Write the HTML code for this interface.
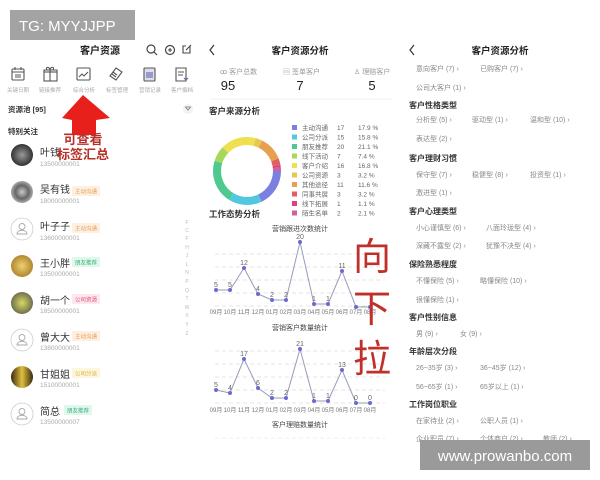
<!DOCTYPE html>
<html><head><meta charset="utf-8"><style>
html,body{margin:0;padding:0;background:#fff;width:600px;height:480px;overflow:hidden}
svg{display:block;font-family:"Liberation Sans","Noto Sans CJK SC",sans-serif}
.t{font-size:7px;fill:#888}
.s{font-size:8.5px;fill:#333;font-weight:bold}
.nm{font-size:10px;fill:#333}
.ph{font-size:6.5px;fill:#aaa}
.lg{font-size:6.5px;fill:#666}
.ax{font-size:6px;fill:#777}
.v{font-size:7px;fill:#666}
</style></head><body>
<svg width="600" height="480" viewBox="0 0 600 480">
<rect width="600" height="480" fill="#fff"/>

<text x="100" y="54" text-anchor="middle" font-size="10" font-weight="bold" fill="#222">客户资源</text>
<circle cx="151" cy="49" r="4" fill="none" stroke="#444" stroke-width="1.2"/><line x1="154" y1="52" x2="157" y2="55" stroke="#444" stroke-width="1.2"/>
<circle cx="170" cy="50" r="4.5" fill="none" stroke="#444" stroke-width="1.2"/><path d="M168 50h4M170 48v4" stroke="#444" stroke-width="1.1"/>
<path d="M190 46v7h-7v-7h3M186 50l5-5" fill="none" stroke="#444" stroke-width="1.1"/>
<g fill="none" stroke="#555" stroke-width="1.1">
<rect x="12" y="69" width="12" height="11" rx="1"/><path d="M12 72h12M15 67v3M21 67v3M15 75h6M15 77h6"/>
<rect x="44" y="72" width="13" height="9"/><path d="M44 72v-2h13v2M50 70v11M47 70c-2-3 2-4 3 0c1-4 5-3 3 0"/>
<rect x="77" y="68" width="13" height="12" rx="1"/><path d="M79 77l3-3 2 2 4-4"/>
<path d="M110 76l6-8 6 4-6 8z M113 72l4 3M112 74l4 3"/>
<rect x="144" y="68" width="11" height="13" rx="1" fill="#dde" /><rect x="146" y="72" width="7" height="6" fill="#99c" stroke="none"/>
<path d="M176 68h10v13h-10z M178 72h6M178 75h5"/><path d="M184 78l2 2 2-2" stroke="#66a"/>
</g>
<g class="t" style="font-size:5.5px;fill:#aaa" text-anchor="middle">
<text x="18" y="92">关键日期</text><text x="50" y="92">链接推荐</text><text x="84" y="92">综合分析</text><text x="117" y="92">标签管理</text><text x="150" y="92">营销记录</text><text x="182" y="92">客户撰档</text>
</g>
<text x="8" y="112" class="s" style="font-size:7.5px">资源池 [95]</text>
<circle cx="188" cy="109" r="5" fill="#f2f2f2"/><path d="M185.5 107h5l-2.5 3z" fill="none" stroke="#777" stroke-width="0.8"/>
<text x="8" y="134" class="s" style="font-size:7.5px">特别关注</text>

<defs>
<radialGradient id="g1"><stop offset="0" stop-color="#999"/><stop offset="1" stop-color="#333"/></radialGradient>
<radialGradient id="g2"><stop offset="0" stop-color="#ccc"/><stop offset=".6" stop-color="#666"/><stop offset="1" stop-color="#aaa"/></radialGradient>
<radialGradient id="g3"><stop offset="0" stop-color="#f0d070"/><stop offset="1" stop-color="#b08830"/></radialGradient>
<radialGradient id="g4"><stop offset="0" stop-color="#d8d860"/><stop offset="1" stop-color="#707050"/></radialGradient>
<linearGradient id="g5"><stop offset="0" stop-color="#3a2a10"/><stop offset=".5" stop-color="#e0c040"/><stop offset="1" stop-color="#3a2a10"/></linearGradient>
<g id="pp"><circle r="11" fill="#fff" stroke="#ccc" stroke-width="0.8"/><circle cy="-2.5" r="3" fill="none" stroke="#aaa" stroke-width="0.9"/><path d="M-5 5c0-5 10-5 10 0z" fill="none" stroke="#aaa" stroke-width="0.9"/></g>
</defs>
<circle cx="22" cy="155" r="11" fill="url(#g1)"/>
<text x="40" y="156" class="nm">叶钱</text><text x="40" y="166" class="ph">13500000001</text>
<circle cx="22" cy="192" r="11" fill="url(#g2)"/>
<text x="40" y="193" class="nm">吴有钱</text><rect x="72" y="186" width="28" height="10" fill="#fdf0e0"/><text x="86" y="193.5" text-anchor="middle" font-size="5.5" fill="#e8a060">主动沟通</text><text x="40" y="203" class="ph">18000000001</text>
<use href="#pp" x="22" y="229"/>
<text x="40" y="230" class="nm">叶子子</text><rect x="72" y="223" width="28" height="10" fill="#fdf0e0"/><text x="86" y="230.5" text-anchor="middle" font-size="5.5" fill="#e8a060">主动沟通</text><text x="40" y="240" class="ph">13600000001</text>
<circle cx="22" cy="266" r="11" fill="url(#g3)"/>
<text x="40" y="267" class="nm">王小胖</text><rect x="72" y="257" width="28" height="10" fill="#e0f7ec"/><text x="86" y="264.5" text-anchor="middle" font-size="5.5" fill="#40b080">朋友推荐</text><text x="40" y="276" class="ph">13500000001</text>
<circle cx="22" cy="303" r="11" fill="url(#g4)"/>
<text x="40" y="304" class="nm">胡一个</text><rect x="72" y="294" width="28" height="10" fill="#fde6ec"/><text x="86" y="301.5" text-anchor="middle" font-size="5.5" fill="#e05080">公司资源</text><text x="40" y="313" class="ph">18500000001</text>
<use href="#pp" x="22" y="340"/>
<text x="40" y="341" class="nm">曾大大</text><rect x="72" y="331" width="28" height="10" fill="#fdf0e0"/><text x="86" y="338.5" text-anchor="middle" font-size="5.5" fill="#e8a060">主动沟通</text><text x="40" y="350" class="ph">13800000001</text>
<circle cx="22" cy="377" r="11" fill="url(#g5)"/>
<text x="40" y="378" class="nm">甘姐姐</text><rect x="72" y="368" width="28" height="10" fill="#fdf6dd"/><text x="86" y="375.5" text-anchor="middle" font-size="5.5" fill="#d8b040">公司分派</text><text x="40" y="387" class="ph">15100000001</text>
<use href="#pp" x="22" y="414"/>
<text x="40" y="415" class="nm">简总</text><rect x="64" y="405" width="28" height="10" fill="#e0f7ec"/><text x="78" y="412.5" text-anchor="middle" font-size="5.5" fill="#40b080">朋友推荐</text><text x="40" y="424" class="ph">13500000007</text>
<g font-size="5" fill="#bbb" text-anchor="middle">
<text x="187" y="224">F</text><text x="187" y="232">C</text><text x="187" y="240">F</text><text x="187" y="249">H</text><text x="187" y="257">J</text><text x="187" y="266">L</text><text x="187" y="274">N</text><text x="187" y="283">P</text><text x="187" y="292">Q</text><text x="187" y="300">T</text><text x="187" y="309">W</text><text x="187" y="317">X</text><text x="187" y="326">Y</text><text x="187" y="335">Z</text>
</g>
<path d="M83 95 L110 118 L96 120 L96 135 L72 135 L72 120 L62 118 Z" fill="#e8201c"/>
<text x="83" y="144" text-anchor="middle" font-size="13" font-weight="bold" fill="#b8302a">可查看</text>
<text x="83" y="159" text-anchor="middle" font-size="13" font-weight="bold" fill="#b8302a">标签汇总</text>

<path d="M214 45l-4 5 4 5" fill="none" stroke="#333" stroke-width="1.2"/>
<text x="300" y="54" text-anchor="middle" font-size="9.5" font-weight="bold" fill="#222">客户资源分析</text>
<text x="220" y="74" class="t" style="fill:#999">ꝏ 客户总数</text><text x="228" y="90" text-anchor="middle" font-size="13" fill="#222">95</text>
<text x="283" y="74" class="t" style="fill:#999">▤ 签单客户</text><text x="300" y="90" text-anchor="middle" font-size="13" fill="#222">7</text>
<text x="354" y="74" class="t" style="fill:#999">♙ 理赔客户</text><text x="372" y="90" text-anchor="middle" font-size="13" fill="#222">5</text>
<line x1="210" y1="99" x2="392" y2="99" stroke="#f2f2f2"/>
<text x="209" y="114" class="s">客户来源分析</text>
<g fill="none" stroke-width="8" transform="translate(247 171)">
<circle r="30" stroke="#7b7fe0" stroke-dasharray="33.7 188.5" stroke-dashoffset="0"/>
<circle r="30" stroke="#4fc8e0" stroke-dasharray="29.8 188.5" stroke-dashoffset="-33.7"/>
<circle r="30" stroke="#4fc98f" stroke-dasharray="39.8 188.5" stroke-dashoffset="-63.5"/>
<circle r="30" stroke="#a8d85a" stroke-dasharray="13.9 188.5" stroke-dashoffset="-103.3"/>
<circle r="30" stroke="#f0e050" stroke-dasharray="31.7 188.5" stroke-dashoffset="-117.2"/>
<circle r="30" stroke="#e8c850" stroke-dasharray="6 188.5" stroke-dashoffset="-148.9"/>
<circle r="30" stroke="#e8a050" stroke-dasharray="21.9 188.5" stroke-dashoffset="-154.9"/>
<circle r="30" stroke="#e06060" stroke-dasharray="6 188.5" stroke-dashoffset="-176.8"/>
<circle r="30" stroke="#e04080" stroke-dasharray="2.1 188.5" stroke-dashoffset="-182.8"/>
<circle r="30" stroke="#d060a0" stroke-dasharray="4 188.5" stroke-dashoffset="-184.9"/>
</g>
<g class="lg">
<rect x="292" y="125" width="5" height="5" fill="#7b7fe0"/><text x="302" y="130">主动沟通</text><text x="337" y="130">17</text><text x="358" y="130">17.9 %</text>
<rect x="292" y="134.5" width="5" height="5" fill="#4fc8e0"/><text x="302" y="139.5">公司分派</text><text x="337" y="139.5">15</text><text x="358" y="139.5">15.8 %</text>
<rect x="292" y="144" width="5" height="5" fill="#4fc98f"/><text x="302" y="149">朋友推荐</text><text x="337" y="149">20</text><text x="358" y="149">21.1 %</text>
<rect x="292" y="153.5" width="5" height="5" fill="#a8d85a"/><text x="302" y="158.5">线下活动</text><text x="337" y="158.5">7</text><text x="358" y="158.5">7.4 %</text>
<rect x="292" y="163" width="5" height="5" fill="#f0e050"/><text x="302" y="168">客户介绍</text><text x="337" y="168">16</text><text x="358" y="168">16.8 %</text>
<rect x="292" y="172.5" width="5" height="5" fill="#e8c850"/><text x="302" y="177.5">公司资源</text><text x="337" y="177.5">3</text><text x="358" y="177.5">3.2 %</text>
<rect x="292" y="182" width="5" height="5" fill="#e8a050"/><text x="302" y="187">其他途径</text><text x="337" y="187">11</text><text x="358" y="187">11.6 %</text>
<rect x="292" y="191.5" width="5" height="5" fill="#e06060"/><text x="302" y="196.5">同事共展</text><text x="337" y="196.5">3</text><text x="358" y="196.5">3.2 %</text>
<rect x="292" y="201" width="5" height="5" fill="#e04080"/><text x="302" y="206">线下拓展</text><text x="337" y="206">1</text><text x="358" y="206">1.1 %</text>
<rect x="292" y="210.5" width="5" height="5" fill="#d060a0"/><text x="302" y="215.5">陌生名单</text><text x="337" y="215.5">2</text><text x="358" y="215.5">2.1 %</text>
</g>
<text x="209" y="217" class="s">工作态势分析</text>

<text x="300" y="231" text-anchor="middle" font-size="7" fill="#444">营销跟进次数统计</text>
<g stroke="#e4e4e4" stroke-dasharray="4 3"><line x1="215" y1="254" x2="385" y2="254"/><line x1="215" y1="267" x2="385" y2="267"/><line x1="215" y1="280" x2="385" y2="280"/><line x1="215" y1="293" x2="385" y2="293"/><line x1="215" y1="306" x2="385" y2="306"/></g>
<polyline fill="none" stroke="#9a9aba" stroke-width="1" points="216,290 230,290 244,268 258,294 272,300 286,300 300,242 314,304 328,304 342,271 356,307 370,307"/>
<g fill="#6a6ad0"><circle cx="216" cy="290" r="2"/><circle cx="230" cy="290" r="2"/><circle cx="244" cy="268" r="2"/><circle cx="258" cy="294" r="2"/><circle cx="272" cy="300" r="2"/><circle cx="286" cy="300" r="2"/><circle cx="300" cy="242" r="2"/><circle cx="314" cy="304" r="2"/><circle cx="328" cy="304" r="2"/><circle cx="342" cy="271" r="2"/><circle cx="356" cy="307" r="2"/><circle cx="370" cy="307" r="2"/></g>
<g class="v" text-anchor="middle"><text x="216" y="287">5</text><text x="230" y="287">5</text><text x="244" y="265">12</text><text x="258" y="291">4</text><text x="272" y="297">2</text><text x="286" y="297">2</text><text x="300" y="239">20</text><text x="314" y="301">1</text><text x="328" y="301">1</text><text x="342" y="268">11</text></g>
<g class="ax" text-anchor="middle"><text x="216" y="314">09月</text><text x="230" y="314">10月</text><text x="244" y="314">11月</text><text x="258" y="314">12月</text><text x="272" y="314">01月</text><text x="286" y="314">02月</text><text x="300" y="314">03月</text><text x="314" y="314">04月</text><text x="328" y="314">05月</text><text x="342" y="314">06月</text><text x="356" y="314">07月</text><text x="370" y="314">08月</text></g>

<text x="300" y="330" text-anchor="middle" font-size="7" fill="#444">营销客户数量统计</text>
<g stroke="#e4e4e4" stroke-dasharray="4 3"><line x1="215" y1="351" x2="385" y2="351"/><line x1="215" y1="364" x2="385" y2="364"/><line x1="215" y1="377" x2="385" y2="377"/><line x1="215" y1="390" x2="385" y2="390"/><line x1="215" y1="403" x2="385" y2="403"/></g>
<polyline fill="none" stroke="#9a9aba" stroke-width="1" points="216,390 230,393 244,359 258,388 272,398 286,398 300,349 314,401 328,401 342,370 356,403 370,403"/>
<g fill="#6a6ad0"><circle cx="216" cy="390" r="2"/><circle cx="230" cy="393" r="2"/><circle cx="244" cy="359" r="2"/><circle cx="258" cy="388" r="2"/><circle cx="272" cy="398" r="2"/><circle cx="286" cy="398" r="2"/><circle cx="300" cy="349" r="2"/><circle cx="314" cy="401" r="2"/><circle cx="328" cy="401" r="2"/><circle cx="342" cy="370" r="2"/><circle cx="356" cy="403" r="2"/><circle cx="370" cy="403" r="2"/></g>
<g class="v" text-anchor="middle"><text x="216" y="387">5</text><text x="230" y="390">4</text><text x="244" y="356">17</text><text x="258" y="385">6</text><text x="272" y="395">2</text><text x="286" y="395">2</text><text x="300" y="346">21</text><text x="314" y="398">1</text><text x="328" y="398">1</text><text x="342" y="367">13</text><text x="356" y="400">0</text><text x="370" y="400">0</text></g>
<g class="ax" text-anchor="middle"><text x="216" y="412">09月</text><text x="230" y="412">10月</text><text x="244" y="412">11月</text><text x="258" y="412">12月</text><text x="272" y="412">01月</text><text x="286" y="412">02月</text><text x="300" y="412">03月</text><text x="314" y="412">04月</text><text x="328" y="412">05月</text><text x="342" y="412">06月</text><text x="356" y="412">07月</text><text x="370" y="412">08月</text></g>
<text x="300" y="427" text-anchor="middle" font-size="7" fill="#444">客户理赔数量统计</text>
<line x1="215" y1="438" x2="385" y2="438" stroke="#eee" stroke-dasharray="4 3"/>

<g font-size="38" fill="#c0302a" text-anchor="middle" font-family="'Noto Sans CJK SC',sans-serif">
<text x="372" y="270">向</text><text x="372" y="322">下</text><text x="372" y="372">拉</text>
</g>

<path d="M414 45l-4 5 4 5" fill="none" stroke="#333" stroke-width="1.2"/>
<text x="500" y="54" text-anchor="middle" font-size="9.5" font-weight="bold" fill="#222">客户资源分析</text>
<g class="t">
<text x="416" y="71">意向客户 (7)  ›</text><text x="480" y="71">已购客户 (7)  ›</text>
<text x="416" y="90">公司大客户 (1)  ›</text>
<text x="416" y="122">分析型 (5)  ›</text><text x="472" y="122">驱动型 (1)  ›</text><text x="530" y="122">温和型 (10)  ›</text>
<text x="416" y="141">表达型 (2)  ›</text>
<text x="416" y="177">保守型 (7)  ›</text><text x="472" y="177">稳健型 (8)  ›</text><text x="530" y="177">投资型 (1)  ›</text>
<text x="416" y="195">激进型 (1)  ›</text>
<text x="416" y="230">小心谨慎型 (6)  ›</text><text x="486" y="230">八面玲珑型 (4)  ›</text>
<text x="416" y="248">深藏不露型 (2)  ›</text><text x="486" y="248">犹豫不决型 (4)  ›</text>
<text x="416" y="283">不懂保险 (5)  ›</text><text x="480" y="283">略懂保险 (10)  ›</text>
<text x="416" y="302">很懂保险 (1)  ›</text>
<text x="416" y="336">男 (9)  ›</text><text x="460" y="336">女 (9)  ›</text>
<text x="416" y="370">26~35岁 (3)  ›</text><text x="480" y="370">36~45岁 (12)  ›</text>
<text x="416" y="389">56~65岁 (1)  ›</text><text x="480" y="389">65岁以上 (1)  ›</text>
<text x="416" y="423">在家待业 (2)  ›</text><text x="480" y="423">公职人员 (1)  ›</text>
<text x="416" y="441">企业职员 (7)  ›</text><text x="480" y="441">个体商户 (2)  ›</text><text x="543" y="441">教师 (2)  ›</text>
</g>
<g class="s" style="font-size:8px">
<text x="409" y="108">客户性格类型</text>
<text x="409" y="161">客户理财习惯</text>
<text x="409" y="214">客户心理类型</text>
<text x="409" y="267">保险熟悉程度</text>
<text x="409" y="320">客户性别信息</text>
<text x="409" y="354">年龄层次分段</text>
<text x="409" y="407">工作岗位职业</text>
</g>

<rect x="10" y="10" width="125" height="30" fill="#a3a3a3"/>
<text x="19" y="31" font-size="15" fill="#fff">TG: MYYJJPP</text>
<rect x="420" y="440" width="170" height="30" fill="#9a9a9a"/>
<text x="505" y="461" text-anchor="middle" font-size="15" fill="#fff">www.prowanbo.com</text>
</svg>
</body></html>
